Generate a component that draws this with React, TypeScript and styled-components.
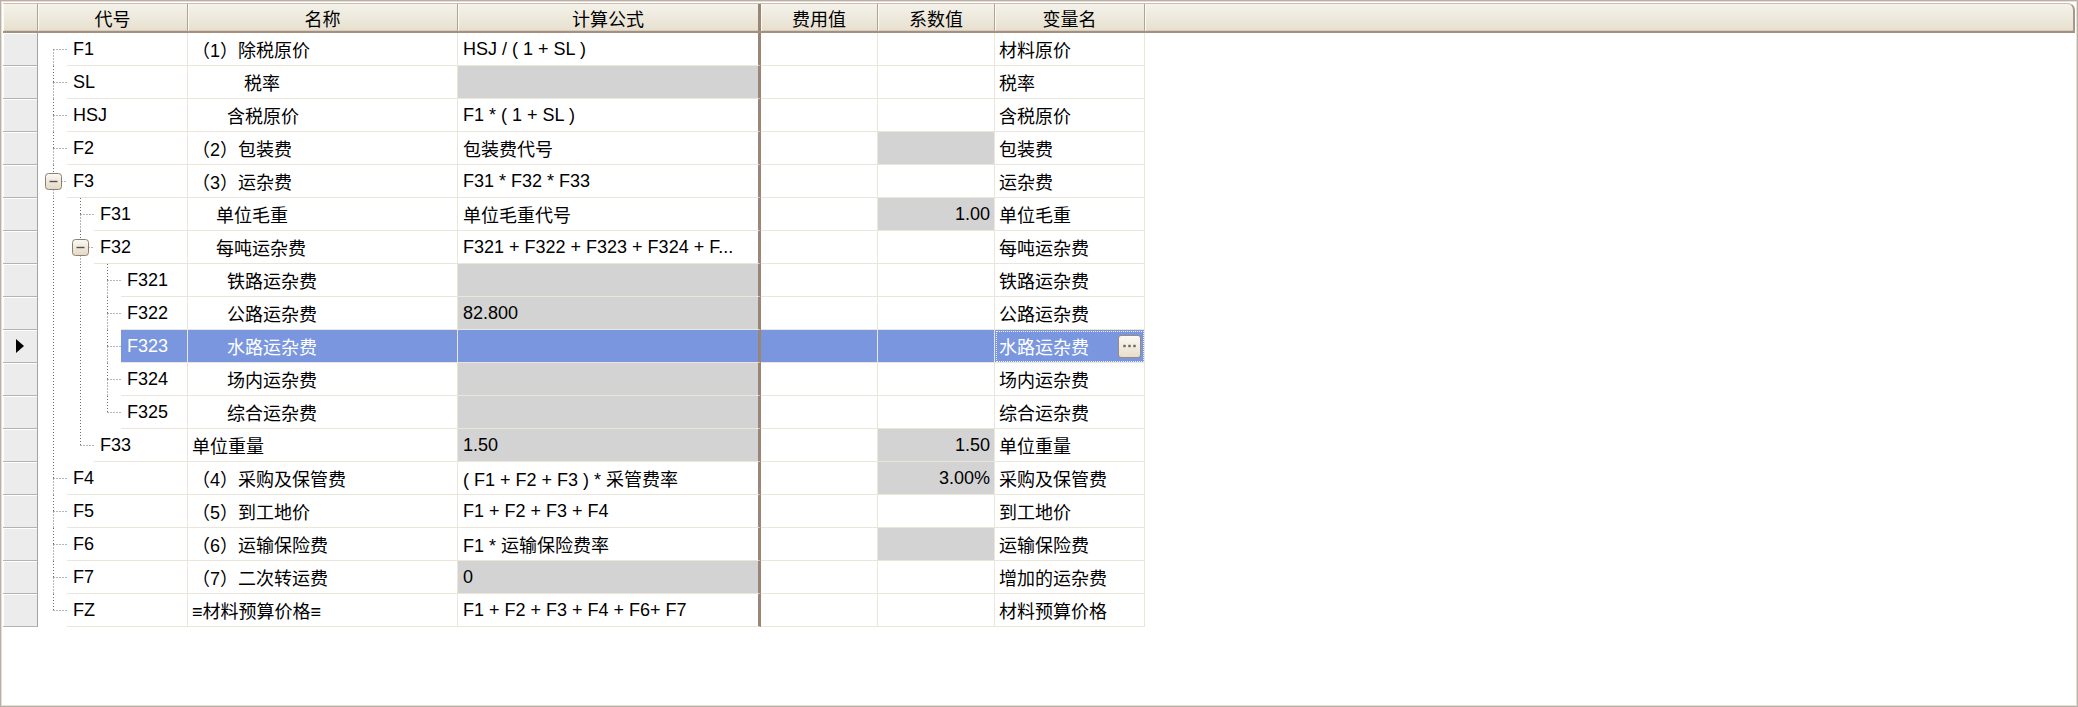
import React from 'react';
import styled, { createGlobalStyle, css } from 'styled-components';

const GRID = '#ebe6da';
const THICK = '#9b8575';
const GREY = '#d3d3d3';
const SELECTED = '#7a96de';

const GlobalStyle = createGlobalStyle`
  html, body {
    margin: 0;
    padding: 0;
    background: #fff;
  }
  body {
    font-family: 'Liberation Sans', 'Noto Sans CJK SC', sans-serif;
    font-size: 18px;
    color: #000;
  }
  * {
    box-sizing: border-box;
  }
`;

type Node = {
  code: string;
  name: string;
  namePad?: number;
  formula: string;
  formulaGrey?: boolean;
  coef?: string;
  coefGrey?: boolean;
  varName: string;
  level: number;
  expanded?: boolean;
  selected?: boolean;
};

const rows: Node[] = [
  { code: 'F1', name: '（1）除税原价', formula: 'HSJ / ( 1 + SL )', varName: '材料原价', level: 0 },
  { code: 'SL', name: '税率', namePad: 52, formula: '', formulaGrey: true, varName: '税率', level: 0 },
  { code: 'HSJ', name: '含税原价', namePad: 35, formula: 'F1 * ( 1 + SL )', varName: '含税原价', level: 0 },
  { code: 'F2', name: '（2）包装费', formula: '包装费代号', coefGrey: true, varName: '包装费', level: 0 },
  { code: 'F3', name: '（3）运杂费', formula: 'F31 * F32 * F33', varName: '运杂费', level: 0, expanded: true },
  { code: 'F31', name: '单位毛重', namePad: 24, formula: '单位毛重代号', coef: '1.00', coefGrey: true, varName: '单位毛重', level: 1 },
  { code: 'F32', name: '每吨运杂费', namePad: 24, formula: 'F321 + F322 + F323 + F324 + F...', varName: '每吨运杂费', level: 1, expanded: true },
  { code: 'F321', name: '铁路运杂费', namePad: 35, formula: '', formulaGrey: true, varName: '铁路运杂费', level: 2 },
  { code: 'F322', name: '公路运杂费', namePad: 35, formula: '82.800', formulaGrey: true, varName: '公路运杂费', level: 2 },
  { code: 'F323', name: '水路运杂费', namePad: 35, formula: '', formulaGrey: true, varName: '水路运杂费', level: 2, selected: true },
  { code: 'F324', name: '场内运杂费', namePad: 35, formula: '', formulaGrey: true, varName: '场内运杂费', level: 2 },
  { code: 'F325', name: '综合运杂费', namePad: 35, formula: '', formulaGrey: true, varName: '综合运杂费', level: 2 },
  { code: 'F33', name: '单位重量', formula: '1.50', formulaGrey: true, coef: '1.50', coefGrey: true, varName: '单位重量', level: 1 },
  { code: 'F4', name: '（4）采购及保管费', formula: '( F1 + F2 + F3 ) * 采管费率', coef: '3.00%', coefGrey: true, varName: '采购及保管费', level: 0 },
  { code: 'F5', name: '（5）到工地价', formula: 'F1 + F2 + F3 + F4', varName: '到工地价', level: 0 },
  { code: 'F6', name: '（6）运输保险费', formula: 'F1 * 运输保险费率', coefGrey: true, varName: '运输保险费', level: 0 },
  { code: 'F7', name: '（7）二次转运费', formula: '0', formulaGrey: true, varName: '增加的运杂费', level: 0 },
  { code: 'FZ', name: '≡材料预算价格≡', formula: 'F1 + F2 + F3 + F4 + F6+ F7', varName: '材料预算价格', level: 0 },
];

// does a line at `level` continue below row i
const continues = (i: number, level: number) => {
  for (let j = i + 1; j < rows.length; j++) {
    if (rows[j].level < level) return false;
    if (rows[j].level === level) return true;
  }
  return false;
};

const COLS = {
  indicator: 35,
  code: 150,
  name: 270,
  formula: 303,
  fee: 117,
  coef: 117,
  varName: 150,
};

const ROW_H = 33;
const STEP = 27;

const TreeGuide = ({ index, node }: { index: number; node: Node }) => {
  const w = 29 + STEP * node.level;
  const cy = 16.5;
  const x = 15 + STEP * node.level + 0.5;
  const gap = node.expanded ? 8 : 0;
  const dotted = { stroke: '#6f6f6f', strokeWidth: 1, strokeDasharray: '1 2' };
  const parts: React.ReactNode[] = [];
  for (let k = 0; k < node.level; k++) {
    if (continues(index, k)) {
      const xk = 15 + STEP * k + 0.5;
      parts.push(<line key={`a${k}`} x1={xk} y1={0} x2={xk} y2={ROW_H} {...dotted} />);
    }
  }
  if (index > 0) parts.push(<line key="top" x1={x} y1={0} x2={x} y2={cy - gap} {...dotted} />);
  if (continues(index, node.level))
    parts.push(<line key="bot" x1={x} y1={cy + gap} x2={x} y2={ROW_H} {...dotted} />);
  parts.push(<line key="h" x1={x + gap} y1={cy} x2={w} y2={cy} {...dotted} />);
  return (
    <svg width={w} height={ROW_H} style={{ flex: 'none', display: 'block' }}>
      <defs>
        <linearGradient id="btnfill" x1="0" y1="0" x2="0" y2="1">
          <stop offset="0" stopColor="#fbf9f3" />
          <stop offset="1" stopColor="#e2d9c6" />
        </linearGradient>
      </defs>
      {parts}
      {node.expanded && (
        <g>
          <rect x={x - 8} y={cy - 8} width={16} height={16} rx={3} fill="url(#btnfill)" stroke="#8f7e6e" />
          <line x1={x - 4} y1={cy} x2={x + 4} y2={cy} stroke="#5a5048" strokeWidth={1.4} />
        </g>
      )}
    </svg>
  );
};

const Frame = styled.div`
  width: 2078px;
  height: 707px;
  border: 1px solid #b9afa5;
  box-shadow: inset 0 0 0 1px #e4dfd9;
  padding: 2px;
  background: #fff;
  display: flex;
  flex-direction: column;
`;

const Header = styled.div`
  display: flex;
  height: 30px;
  flex: none;
  background: linear-gradient(#f4f2ea, #e7e0cf);
  border-top: 1px solid #cdbfb1;
  border-right: 2px solid #a8978a;
  border-bottom: 2px solid #a3907f;
  border-top-right-radius: 7px;
  box-shadow: inset 0 -1px 0 #d8ccbd;
`;

const HeaderCell = styled.div<{ $w?: number; $thick?: boolean }>`
  ${(p) => (p.$w ? css`width: ${p.$w}px; flex: none;` : css`flex: 1;`)}
  display: flex;
  align-items: center;
  justify-content: center;
  border-right: ${(p) => (p.$thick ? `3px solid ${THICK}` : '1px solid #b3a191')};
  box-shadow: inset 1px 0 0 #fbfaf6;
  white-space: nowrap;
  &:last-child {
    border-right: none;
  }
`;

const Body = styled.div`
  display: flex;
  flex-direction: column;
`;

const Row = styled.div`
  display: flex;
  height: ${ROW_H}px;
`;

const Indicator = styled.div`
  width: ${COLS.indicator}px;
  flex: none;
  display: flex;
  align-items: center;
  padding-left: 13px;
  background: #ececec;
  border-right: 1px solid #a3a3a3;
  border-bottom: 1px solid #b3b3b3;
  box-shadow: inset 1px 1px 0 #fff;
`;

const Arrow = styled.div`
  width: 0;
  height: 0;
  border-left: 8px solid #000;
  border-top: 7px solid transparent;
  border-bottom: 7px solid transparent;
`;

const TreeCol = styled.div`
  width: ${COLS.code}px;
  flex: none;
  display: flex;
`;

const Cell = styled.div<{
  $w?: number;
  $grey?: boolean;
  $sel?: boolean;
  $right?: boolean;
  $thick?: boolean;
  $pad?: number;
}>`
  ${(p) => (p.$w ? css`width: ${p.$w}px; flex: none;` : css`flex: 1; min-width: 0;`)}
  display: flex;
  align-items: center;
  justify-content: ${(p) => (p.$right ? 'flex-end' : 'flex-start')};
  padding: 0 ${(p) => (p.$right ? 4 : 0)}px 0 ${(p) => p.$pad ?? 5}px;
  background: ${(p) => (p.$sel ? SELECTED : p.$grey ? GREY : '#fff')};
  color: ${(p) => (p.$sel ? '#fff' : '#000')};
  border-bottom: 1px solid ${GRID};
  border-right: ${(p) => (p.$thick ? `3px solid ${THICK}` : `1px solid ${GRID}`)};
  white-space: nowrap;
  overflow: hidden;
`;

const FocusCell = styled(Cell)`
  outline: 1px dotted #eef2ff;
  outline-offset: -2px;
  padding-right: 3px;
`;

const CellText = styled.span`
  overflow: hidden;
`;

const EllipsisButton = styled.div`
  margin-left: auto;
  width: 23px;
  height: 23px;
  flex: none;
  display: flex;
  align-items: center;
  justify-content: center;
  border: 1px solid #9c8a7a;
  border-radius: 3px;
  background: linear-gradient(#fbf9f3, #e6dece);
`;

const Dots = () => (
  <svg width="13" height="4" viewBox="0 0 13 4">
    {[1.5, 6.5, 11.5].map((cx) => (
      <rect key={cx} x={cx - 1.2} y={0.8} width={2.4} height={2.4} fill="#6e6358" />
    ))}
  </svg>
);

const Empty = styled.div`
  flex: 1;
`;

export default function App() {
  return (
    <>
      <GlobalStyle />
      <Frame>
        <Header>
          <HeaderCell $w={COLS.indicator} />
          <HeaderCell $w={COLS.code}>代号</HeaderCell>
          <HeaderCell $w={COLS.name}>名称</HeaderCell>
          <HeaderCell $w={COLS.formula} $thick>计算公式</HeaderCell>
          <HeaderCell $w={COLS.fee}>费用值</HeaderCell>
          <HeaderCell $w={COLS.coef}>系数值</HeaderCell>
          <HeaderCell $w={COLS.varName}>变量名</HeaderCell>
          <HeaderCell />
        </Header>
        <Body>
          {rows.map((r, i) => (
            <Row key={r.code}>
              <Indicator>{r.selected && <Arrow />}</Indicator>
              <TreeCol>
                <TreeGuide index={i} node={r} />
                <Cell $sel={r.selected} $pad={6}>
                  {r.code}
                </Cell>
              </TreeCol>
              <Cell $w={COLS.name} $sel={r.selected} $pad={4 + (r.namePad ?? 0)}>
                {r.name}
              </Cell>
              <Cell $w={COLS.formula} $sel={r.selected} $grey={r.formulaGrey} $thick>
                <CellText>{r.formula}</CellText>
              </Cell>
              <Cell $w={COLS.fee} $sel={r.selected} />
              <Cell $w={COLS.coef} $sel={r.selected} $grey={r.coefGrey} $right>
                {r.coef}
              </Cell>
              {r.selected ? (
                <FocusCell $w={COLS.varName} $sel $pad={4}>
                  <CellText>{r.varName}</CellText>
                  <EllipsisButton>
                    <Dots />
                  </EllipsisButton>
                </FocusCell>
              ) : (
                <Cell $w={COLS.varName} $pad={4}>
                  {r.varName}
                </Cell>
              )}
              <Empty />
            </Row>
          ))}
        </Body>
      </Frame>
    </>
  );
}
